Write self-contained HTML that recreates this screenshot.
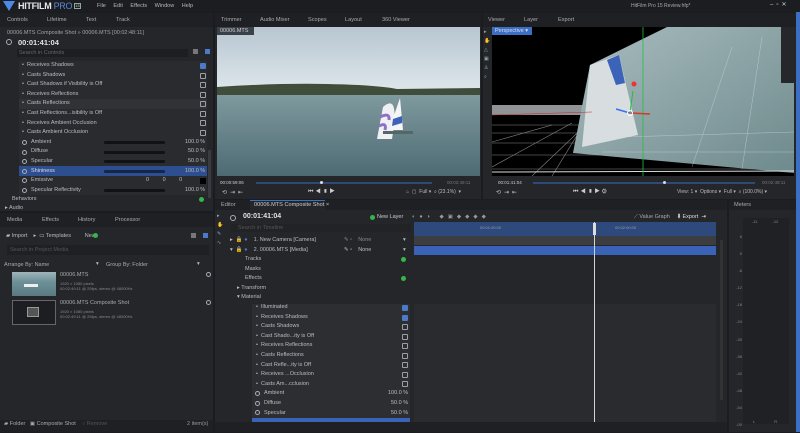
<!DOCTYPE html>
<html><head><style>
*{margin:0;padding:0;box-sizing:border-box}
body{width:800px;height:432px;overflow:hidden;background:#1b1c1f;font-family:"Liberation Sans",sans-serif;color:#b9bcc2;font-size:5.5px;position:relative}
.a{position:absolute}
.p{position:absolute;background:#25262a}
.tab{position:absolute;color:#a8abb1;font-size:5.6px}
.row{position:absolute;height:9.6px;line-height:9.6px;white-space:nowrap}
.cb{position:absolute;width:6px;height:6px;border:0.8px solid #9aa0a8;border-radius:1px}
.cbk{background:#4d79c9;border-color:#4d79c9}
.sl{position:absolute;height:3px;background:#111215;border-radius:1px}
.dot{position:absolute;width:5px;height:5px;border:1px solid #aab;border-radius:50%}
.g{position:absolute;width:5px;height:5px;border-radius:50%;background:#38b449}
</style></head><body>
<!-- title bar -->
<div class="a" style="left:0;top:0;width:800px;height:12px;background:#1c1d20"></div>
<svg class="a" style="left:2px;top:0" width="14" height="12"><polygon points="1,1 13,1 7,11" fill="#4a8be8"/></svg>
<div class="a" style="left:18px;top:1px;font-size:9px;font-weight:bold;color:#e8e8ea;letter-spacing:-0.3px">HITFILM<span style="color:#5a86d6;font-weight:normal"> PRO</span></div>
<div class="a" style="left:74px;top:3px;width:7px;height:6px;border:1px solid #8a9;font-size:4px;color:#ccc;text-align:center;line-height:4px">15</div>
<div class="a" style="left:97px;top:3px;font-size:5.5px;color:#b5b8be;word-spacing:6px">File Edit Effects Window Help</div>
<div class="a" style="left:631px;top:3px;font-size:5px;color:#aaa">HitFilm Pro 15 Review.hfp*</div>
<div class="a" style="left:770px;top:1px;font-size:6px;color:#ccc;letter-spacing:3px">–▫✕</div>
<div class="a" style="left:796px;top:12px;width:4px;height:420px;background:#3a6fc5"></div>

<!-- Controls panel -->
<div class="p" style="left:0;top:13px;width:213px;height:198px"></div>
<div class="a" style="left:0;top:13px;width:213px;height:14px;background:#1f2023"></div>
<div class="tab" style="left:7px;top:17px">Controls</div><div class="tab" style="left:47px;top:17px">Lifetime</div><div class="tab" style="left:86px;top:17px">Text</div><div class="tab" style="left:116px;top:17px">Track</div>
<div class="a" style="left:7px;top:30px;color:#a0a3a9">00006.MTS Composite Shot » 00006.MTS [00:02:48:11]</div>
<div class="a" style="left:18px;top:38px;font-size:7.5px;font-weight:bold;color:#e0e2e6">00:01:41:04</div>
<div class="dot" style="left:6px;top:39px;width:6px;height:6px"></div>
<div class="a" style="left:17px;top:49px;width:171px;height:8px;background:#1d1e21;color:#666;padding-left:2px;line-height:8px">Search in Controls</div>
<div class="a" style="left:205px;top:49px;width:5px;height:5px;background:#4d79c9"></div>
<div class="a" style="left:193px;top:49px;width:5px;height:5px;background:#777"></div>
<div class="a" style="left:19px;top:61px;width:188px;height:134px;background:#2a2b2f"></div>
<div class="a" style="left:19px;top:99px;width:188px;height:10px;background:#313236"></div>
<div class="a" style="left:19px;top:166px;width:188px;height:9.6px;background:#2e4f8f"></div>
<div class="a" style="left:208px;top:150px;width:3px;height:48px;background:#3a3b40"></div>
<div class="row" style="left:22px;top:61px">•&nbsp; Receives Shadows</div><div class="cb cbk" style="left:200px;top:63px"></div>
<div class="row" style="left:22px;top:70.6px">•&nbsp; Casts Shadows</div><div class="cb" style="left:200px;top:73px"></div>
<div class="row" style="left:22px;top:80.2px">•&nbsp; Cast Shadows if Visibility is Off</div><div class="cb" style="left:200px;top:82px"></div>
<div class="row" style="left:22px;top:89.8px">•&nbsp; Receives Reflections</div><div class="cb" style="left:200px;top:92px"></div>
<div class="row" style="left:22px;top:99.4px">•&nbsp; Casts Reflections</div><div class="cb" style="left:200px;top:101px"></div>
<div class="row" style="left:22px;top:109px">•&nbsp; Cast Reflections...isibility is Off</div><div class="cb" style="left:200px;top:111px"></div>
<div class="row" style="left:22px;top:118.6px">•&nbsp; Receives Ambient Occlusion</div><div class="cb" style="left:200px;top:120px"></div>
<div class="row" style="left:22px;top:128.2px">•&nbsp; Casts Ambient Occlusion</div><div class="cb" style="left:200px;top:130px"></div>
<div class="dot" style="left:22px;top:140px"></div><div class="row" style="left:31px;top:137.8px">Ambient</div><div class="sl" style="left:104px;top:141px;width:61px"></div><div class="row" style="left:185px;top:137.8px">100.0 %</div>
<div class="dot" style="left:22px;top:149.6px"></div><div class="row" style="left:31px;top:147.4px">Diffuse</div><div class="sl" style="left:104px;top:151px;width:61px"></div><div class="row" style="left:188px;top:147.4px">50.0 %</div>
<div class="dot" style="left:22px;top:159px"></div><div class="row" style="left:31px;top:157px">Specular</div><div class="sl" style="left:104px;top:160px;width:61px"></div><div class="row" style="left:188px;top:157px">50.0 %</div>
<div class="dot" style="left:22px;top:168.6px"></div><div class="row" style="left:31px;top:166.6px;color:#dde">Shininess</div><div class="sl" style="left:104px;top:170px;width:61px;background:#16254a"></div><div class="row" style="left:185px;top:166.6px">100.0 %</div>
<div class="dot" style="left:22px;top:178px"></div><div class="row" style="left:31px;top:176.2px">Emissive</div><div class="row" style="left:146px;top:176.2px;word-spacing:12px">0 0 0</div><div class="a" style="left:200px;top:178px;width:6px;height:6px;background:#000"></div>
<div class="dot" style="left:22px;top:188px"></div><div class="row" style="left:31px;top:185.8px">Specular Reflectivity</div><div class="sl" style="left:104px;top:189px;width:61px"></div><div class="row" style="left:185px;top:185.8px">100.0 %</div>
<div class="row" style="left:12px;top:195px">Behaviors</div><div class="g" style="left:199px;top:197px"></div>
<div class="row" style="left:5px;top:204px">▸ Audio</div>

<!-- Media panel -->
<div class="p" style="left:0;top:213px;width:213px;height:219px"></div>
<div class="a" style="left:0;top:213px;width:213px;height:14px;background:#1f2023"></div>
<div class="tab" style="left:7px;top:217px">Media</div><div class="tab" style="left:42px;top:217px">Effects</div><div class="tab" style="left:78px;top:217px">History</div><div class="tab" style="left:115px;top:217px">Processor</div>
<div class="a" style="left:6px;top:231px;width:210px;height:10px;color:#b8bbc0;line-height:10px">▰ Import &nbsp;&nbsp;&nbsp;▸ &nbsp;▭ Templates &nbsp;&nbsp;&nbsp;&nbsp;&nbsp;&nbsp;&nbsp;&nbsp;New</div>
<div class="g" style="left:93px;top:233px"></div>
<div class="a" style="left:203px;top:233px;width:5px;height:5px;background:#4d79c9"></div><div class="a" style="left:191px;top:233px;width:5px;height:5px;background:#777"></div>
<div class="a" style="left:7px;top:245px;width:202px;height:10px;background:#1f2023;color:#555;padding-left:3px;line-height:10px">Search in Project Media</div>
<div class="a" style="left:4px;top:262px;color:#aaa">Arrange By: Name</div><div class="a" style="left:96px;top:261px">▾</div><div class="a" style="left:106px;top:262px;color:#aaa">Group By: Folder</div><div class="a" style="left:197px;top:261px">▾</div>
<div class="a" style="left:12px;top:272px;width:44px;height:24px;background:linear-gradient(#9fb6bb,#6e9097 40%,#587a80)"></div>
<div class="a" style="left:24px;top:284px;width:14px;height:3px;background:#eee"></div>
<div class="a" style="left:60px;top:272px;color:#aaa">00006.MTS</div><div class="a" style="left:60px;top:281px;font-size:4px;color:#888">1920 × 1080 pixels<br>00:02:49:11 @ 25fps, stereo @ 48000Hz</div>
<div class="a" style="left:12px;top:300px;width:44px;height:25px;border:0.8px solid #666;background:#1d1e21"></div>
<div class="a" style="left:27px;top:307px;width:12px;height:10px;border:1px solid #999;background:#555"></div>
<div class="a" style="left:60px;top:300px;color:#aaa">00006.MTS Composite Shot</div><div class="a" style="left:60px;top:309px;font-size:4px;color:#888">1920 × 1080 pixels<br>00:02:49:11 @ 25fps, stereo @ 48000Hz</div>
<div class="dot" style="left:206px;top:272px"></div><div class="dot" style="left:206px;top:300px"></div>
<div class="a" style="left:0;top:420px;width:213px;height:12px;background:#1f2023"></div>
<div class="a" style="left:4px;top:421px;color:#aaa">▰ Folder &nbsp;&nbsp;▣ Composite Shot &nbsp;&nbsp;&nbsp;<span style="color:#555">○ Remove</span></div>
<div class="a" style="left:187px;top:421px;color:#999">2 item(s)</div>

<!-- Trimmer -->
<div class="p" style="left:215px;top:13px;width:266px;height:186px"></div>
<div class="a" style="left:215px;top:13px;width:266px;height:14px;background:#1f2023"></div>
<div class="tab" style="left:221px;top:17px">Trimmer</div><div class="tab" style="left:260px;top:17px">Audio Mixer</div><div class="tab" style="left:308px;top:17px">Scopes</div><div class="tab" style="left:345px;top:17px">Layout</div><div class="tab" style="left:382px;top:17px">360 Viewer</div>
<svg class="a" style="left:217px;top:27px" width="263" height="149">
<defs><linearGradient id="sky" x1="0" y1="0" x2="0" y2="1"><stop offset="0" stop-color="#b7c6d1"/><stop offset="1" stop-color="#dde5ea"/></linearGradient>
<linearGradient id="wat" x1="0" y1="0" x2="0" y2="1"><stop offset="0" stop-color="#7f9a9e"/><stop offset="1" stop-color="#4d6a73"/></linearGradient></defs>
<rect width="263" height="62" fill="url(#sky)"/>
<path d="M0 60 Q60 56 110 57 T180 62 L263 61 L263 69 L0 69Z" fill="#3f4d3a"/>
<rect y="68" width="263" height="81" fill="url(#wat)"/>
<g transform="translate(58,-5)">
<path d="M108 85 Q125 70 117 117 L102 117Z" fill="#f0f0f4"/><path d="M105 95 Q115 90 114 98 M104 104 Q112 100 110 108" stroke="#8b72c6" stroke-width="3" fill="none"/>
<path d="M125 76 L128 108 L114 108Z" fill="#f5f5f6"/><path d="M118 97 L127 94 L127 101 L117 104Z" fill="#3b63b8"/>
<rect x="108" y="109" width="30" height="3" fill="#566"/>
</g>
</svg>
<div class="a" style="left:217px;top:27px;width:37px;height:8px;background:#3a4048;color:#ccc;padding-left:3px;line-height:8px">00006.MTS</div>
<div class="a" style="left:220px;top:180px;font-size:4.5px;color:#ccc">00:00:59:06</div>
<div class="a" style="left:256px;top:182px;width:176px;height:1.5px;background:#2f4a78"></div><div class="a" style="left:320px;top:181px;width:3px;height:3px;background:#ddd;border-radius:50%"></div>
<div class="a" style="left:447px;top:180px;font-size:4.5px;color:#777">00:02:49:11</div>
<div class="a" style="left:222px;top:189px;font-size:6px;color:#bbb;letter-spacing:3px">⟲⇥⇤</div>
<div class="a" style="left:308px;top:189px;font-size:6px;color:#ccc;letter-spacing:2px">⏮◀▮▶</div>
<div class="a" style="left:406px;top:189px;font-size:5px;color:#bbb">⌂ &nbsp;▢ &nbsp;Full ▾ &nbsp;⌕ (23.1%) &nbsp;▾</div>

<!-- Viewer -->
<div class="p" style="left:483px;top:13px;width:313px;height:186px"></div>
<div class="a" style="left:483px;top:13px;width:313px;height:14px;background:#1f2023"></div>
<div class="tab" style="left:488px;top:17px">Viewer</div><div class="tab" style="left:524px;top:17px">Layer</div><div class="tab" style="left:558px;top:17px">Export</div>
<svg class="a" style="left:492px;top:27px" width="302" height="149">
<defs><linearGradient id="pl" x1="0" y1="0" x2="1" y2="1"><stop offset="0" stop-color="#a9bcbf"/><stop offset="1" stop-color="#6e8a8c"/></linearGradient></defs>
<rect width="302" height="149" fill="#000"/>
<rect y="78" width="100" height="10" fill="#cfd2d4" opacity="0.7"/>
<g stroke="#aaa" stroke-width="0.6" opacity="0.8">
<line x1="0" y1="98" x2="302" y2="98"/><line x1="0" y1="106" x2="302" y2="106"/><line x1="0" y1="116" x2="302" y2="116"/><line x1="0" y1="128" x2="302" y2="128"/><line x1="0" y1="142" x2="302" y2="142"/>
<line x1="40" y1="149" x2="100" y2="92"/><line x1="0" y1="140" x2="80" y2="96"/><line x1="0" y1="115" x2="60" y2="98"/><line x1="60" y1="149" x2="95" y2="92"/>
</g>
<polygon points="81,126 98,38 175,0 302,0 302,146" fill="url(#pl)"/>
<g stroke="#dde" stroke-width="0.5" opacity="0.6"><line x1="130" y1="110" x2="302" y2="105"/><line x1="110" y1="125" x2="302" y2="125"/><line x1="200" y1="140" x2="240" y2="20"/><line x1="250" y1="142" x2="270" y2="10"/></g>
<polygon points="98,38 127,28 146,108 90,120" fill="#d8dde0"/><polygon points="115,33 127,28 133,56 124,58" fill="#3b63b8"/>
<line x1="0" y1="145" x2="302" y2="144" stroke="#ddd" stroke-width="1"/>
<line x1="0" y1="88" x2="100" y2="85" stroke="#b33" stroke-width="0.6"/>
<line x1="151" y1="0" x2="151" y2="149" stroke="#22c040" stroke-width="0.8"/>
<line x1="138" y1="86" x2="124" y2="82" stroke="#3a6ff0" stroke-width="1.5"/><line x1="138" y1="86" x2="158" y2="87" stroke="#d03a2a" stroke-width="1.5"/><line x1="138" y1="86" x2="141" y2="64" stroke="#22c040" stroke-width="1"/>
<circle cx="142" cy="57" r="2.5" fill="#e33"/><circle cx="138" cy="86" r="2.5" fill="none" stroke="#fff"/>
<rect x="289" y="0" width="13" height="56" fill="#26272b"/>
</svg>
<div class="a" style="left:492px;top:27px;width:40px;height:8px;background:#3a6fc5;color:#dde;padding-left:3px;line-height:8px">Perspective ▾</div>
<div class="a" style="left:484px;top:28px;width:7px;height:150px;color:#8aa;font-size:5px;line-height:9px">▸<br>✋<br>△<br>▣<br>♙<br>⌕</div>
<div class="a" style="left:498px;top:180px;font-size:4.5px;color:#ccc">00:01:41:04</div>
<div class="a" style="left:533px;top:182px;width:222px;height:1.5px;background:#2f4a78"></div><div class="a" style="left:663px;top:181px;width:3px;height:3px;background:#ddd;border-radius:50%"></div>
<div class="a" style="left:762px;top:180px;font-size:4.5px;color:#777">00:02:49:11</div>
<div class="a" style="left:496px;top:189px;font-size:6px;color:#bbb;letter-spacing:3px">⟲⇥⇤</div>
<div class="a" style="left:573px;top:189px;font-size:6px;color:#ccc;letter-spacing:2px">⏮◀▮▶⚙</div>
<div class="a" style="left:677px;top:189px;font-size:5px;color:#bbb">View: 1 ▾ &nbsp;Options ▾ &nbsp;Full ▾ &nbsp;⌕ (100.0%) ▾</div>

<!-- Editor -->
<div class="p" style="left:215px;top:200px;width:512px;height:232px"></div>
<div class="a" style="left:215px;top:200px;width:512px;height:10px;background:#1f2023"></div>
<div class="a" style="left:250px;top:200px;width:75px;height:10px;background:#25262a;border-top:1px solid #3a6fc5"></div>
<div class="tab" style="left:221px;top:202px">Editor</div><div class="tab" style="left:254px;top:202px;color:#ccc">00006.MTS Composite Shot ×</div>
<div class="a" style="left:217px;top:212px;width:8px;height:220px;color:#8ab;font-size:5px;line-height:9px">▸<br>✋<br>✎<br>∿</div>
<div class="dot" style="left:230px;top:215px;width:6px;height:6px"></div>
<div class="a" style="left:243px;top:213px;font-size:7px;font-weight:bold;color:#e0e2e6">00:01:41:04</div>
<div class="g" style="left:370px;top:215px"></div><div class="a" style="left:377px;top:214px;color:#ccc">New Layer</div>
<div class="a" style="left:412px;top:214px;color:#999;letter-spacing:4px">◐●◑ ◆▣◆◆◆◆</div>
<div class="a" style="left:634px;top:214px;color:#aaa">⟋ Value Graph &nbsp;&nbsp;&nbsp;&nbsp;<span style="color:#ddd">⬇ Export</span> &nbsp;<span style="color:#ddd">⇥</span></div>
<div class="a" style="left:231px;top:224px;width:180px;height:8px;background:#222326;color:#555;padding-left:7px;line-height:8px">Search in Timeline</div>
<div class="a" style="left:414px;top:222px;width:302px;height:14px;background:#2e4a7c"></div>
<div class="a" style="left:480px;top:225px;font-size:4px;color:#99a">00:01:00:00</div><div class="a" style="left:615px;top:225px;font-size:4px;color:#99a">00:02:00:00</div>
<div class="a" style="left:414px;top:236px;width:302px;height:9px;background:#3c3d41"></div>
<div class="a" style="left:414px;top:246px;width:302px;height:9px;background:#3a63b8"></div>
<div class="a" style="left:414px;top:304px;width:302px;height:118px;background:#2a2b2f"></div>
<div class="a" style="left:594px;top:222px;width:1px;height:200px;background:#cfd2d6"></div>
<div class="a" style="left:593px;top:223px;width:3px;height:12px;background:#ddd"></div>
<div class="a" style="left:720px;top:240px;width:3px;height:160px;background:#333"></div>
<div class="row" style="left:230px;top:236px">▸ &nbsp;🔒 <span style="color:#4d79c9">●</span> &nbsp;&nbsp;&nbsp;1. New Camera [Camera]</div><div class="row" style="left:344px;top:236px;color:#888">✎ ▫ &nbsp;&nbsp;&nbsp;None</div><div class="row" style="left:403px;top:236px">▾</div>
<div class="row" style="left:230px;top:245.6px">▾ &nbsp;🔒 <span style="color:#4d79c9">●</span> &nbsp;&nbsp;&nbsp;2. 00006.MTS [Media]</div><div class="row" style="left:344px;top:245.6px">✎ ▫ &nbsp;&nbsp;&nbsp;None</div><div class="row" style="left:403px;top:245.6px">▾</div>
<div class="row" style="left:245px;top:255px">Tracks</div><div class="g" style="left:401px;top:257px"></div>
<div class="row" style="left:245px;top:264.6px">Masks</div>
<div class="row" style="left:245px;top:274.2px">Effects</div><div class="g" style="left:401px;top:276px"></div>
<div class="row" style="left:237px;top:283.8px">▸ Transform</div>
<div class="row" style="left:237px;top:293.4px">▾ Material</div>
<div class="a" style="left:252px;top:304px;width:158px;height:118px;background:#2d2e32"></div>
<div class="row" style="left:256px;top:303px">•&nbsp; Illuminated</div><div class="cb cbk" style="left:402px;top:305px"></div>
<div class="row" style="left:256px;top:312.6px">•&nbsp; Receives Shadows</div><div class="cb cbk" style="left:402px;top:315px"></div>
<div class="row" style="left:256px;top:322.2px">•&nbsp; Casts Shadows</div><div class="cb" style="left:402px;top:324px"></div>
<div class="row" style="left:256px;top:331.8px">•&nbsp; Cast Shado...ity is Off</div><div class="cb" style="left:402px;top:334px"></div>
<div class="row" style="left:256px;top:341.4px">•&nbsp; Receives Reflections</div><div class="cb" style="left:402px;top:343px"></div>
<div class="row" style="left:256px;top:351px">•&nbsp; Casts Reflections</div><div class="cb" style="left:402px;top:353px"></div>
<div class="row" style="left:256px;top:360.6px">•&nbsp; Cast Refle...ity is Off</div><div class="cb" style="left:402px;top:362px"></div>
<div class="row" style="left:256px;top:370.2px">•&nbsp; Receives ...Occlusion</div><div class="cb" style="left:402px;top:372px"></div>
<div class="row" style="left:256px;top:379.8px">•&nbsp; Casts Am...cclusion</div><div class="cb" style="left:402px;top:381px"></div>
<div class="dot" style="left:255px;top:391px"></div><div class="row" style="left:264px;top:389.4px">Ambient</div><div class="row" style="left:388px;top:389.4px">100.0 %</div>
<div class="dot" style="left:255px;top:401px"></div><div class="row" style="left:264px;top:399px">Diffuse</div><div class="row" style="left:391px;top:399px">50.0 %</div>
<div class="dot" style="left:255px;top:410px"></div><div class="row" style="left:264px;top:408.6px">Specular</div><div class="row" style="left:391px;top:408.6px">50.0 %</div>
<div class="a" style="left:252px;top:418px;width:158px;height:4px;background:#3a63b8"></div>
<div class="a" style="left:215px;top:422px;width:512px;height:10px;background:#1f2023"></div>

<!-- Meters -->
<div class="p" style="left:729px;top:200px;width:67px;height:232px"></div>
<div class="a" style="left:729px;top:200px;width:67px;height:10px;background:#1f2023"></div>
<div class="tab" style="left:734px;top:202px">Meters</div>
<div class="a" style="left:743px;top:218px;width:46px;height:206px;background:#202124"></div>
<div class="a" style="left:752px;top:219px;font-size:4px;color:#888;word-spacing:14px">-11 -12</div>
<div class="a" style="left:732px;top:228px;width:10px;font-size:4px;color:#888;text-align:right;line-height:17.1px">6<br>0<br>-6<br>-12<br>-18<br>-24<br>-30<br>-36<br>-42<br>-48<br>-54<br>-00</div>
<div class="a" style="left:753px;top:419px;font-size:4px;color:#888;word-spacing:18px">L R</div>
</body></html>
